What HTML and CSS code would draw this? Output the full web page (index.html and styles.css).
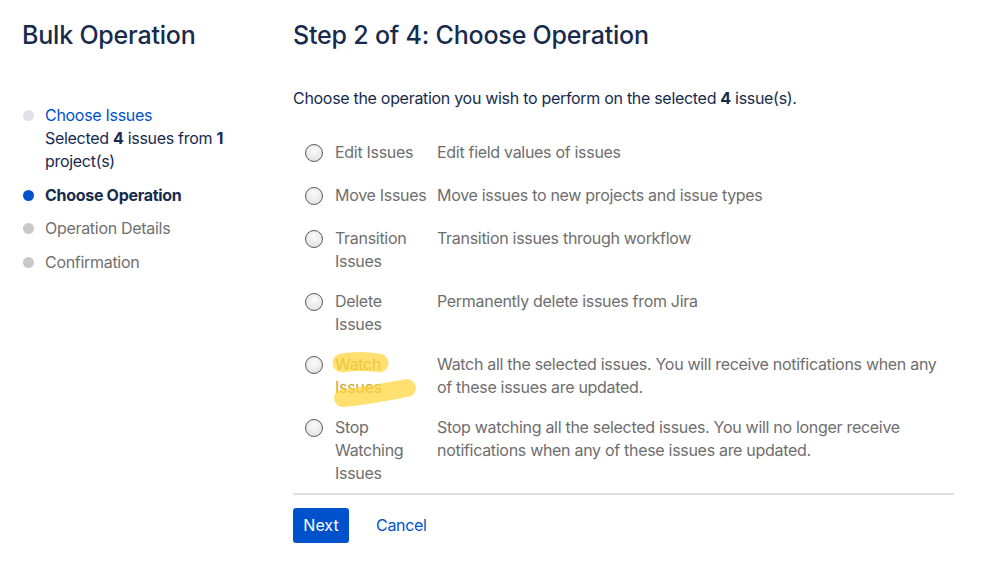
FILE: index.html
```html
<!DOCTYPE html>
<html>
<head>
<meta charset="utf-8">
<link rel="stylesheet" href="styles.css">
</head>
<body>
<div class="page">
  <aside class="side">
    <h1 class="title">Bulk Operation</h1>
    <ul class="steps">
      <li class="step done"><span class="dot"></span><div><a class="link" href="#">Choose Issues</a><div class="sub">Selected <b>4</b> issues from <b>1</b> project(s)</div></div></li>
      <li class="step current"><span class="dot"></span><div>Choose Operation</div></li>
      <li class="step"><span class="dot"></span><div>Operation Details</div></li>
      <li class="step"><span class="dot"></span><div>Confirmation</div></li>
    </ul>
  </aside>
  <main class="main">
    <h1 class="title">Step 2 of 4: Choose Operation</h1>
    <p class="intro">Choose the operation you wish to perform on the selected <b>4</b> issue(s).</p>
    <div class="ops">
      <div class="op"><span class="radio"></span><span class="label">Edit Issues</span><span class="desc">Edit field values of issues</span></div>
      <div class="op"><span class="radio"></span><span class="label">Move Issues</span><span class="desc">Move issues to new projects and issue types</span></div>
      <div class="op"><span class="radio"></span><span class="label">Transition<br>Issues</span><span class="desc">Transition issues through workflow</span></div>
      <div class="op"><span class="radio"></span><span class="label">Delete<br>Issues</span><span class="desc">Permanently delete issues from Jira</span></div>
      <div class="op"><span class="radio"></span><span class="label watch">Watch<br>Issues<svg class="marker" viewBox="0 0 90 60" width="90" height="60"><path class="m1" d="M7 10 C18 8, 32 8, 44 10" /><path class="m2" d="M8 45 C30 43, 55 38, 72 35" /></svg></span><span class="desc">Watch all the selected issues. You will receive notifications when any of these issues are updated.</span></div>
      <div class="op"><span class="radio"></span><span class="label">Stop<br>Watching<br>Issues</span><span class="desc">Stop watching all the selected issues. You will no longer receive notifications when any of these issues are updated.</span></div>
    </div>
    <div class="actions">
      <button class="btn-primary">Next</button>
      <a class="btn-link" href="#">Cancel</a>
    </div>
  </main>
</div>
</body>
</html>
```
FILE: styles.css
```css
* { box-sizing: border-box; }
html, body { margin: 0; padding: 0; background: #fff; }
body {
  font-family: Inter, "Open Sans", "Liberation Sans", sans-serif;
  font-size: 16px;
  line-height: 23px;
  letter-spacing: -0.3px;
  color: #172b4d;
}
.page {
  display: grid;
  grid-template-columns: 271px 661px;
  padding-left: 22px;
  padding-top: 20px;
}
.title {
  margin: 0;
  font-size: 25px;
  line-height: 30px;
  font-weight: 500;
  color: #172b4d;
  letter-spacing: -0.2px;
}
.steps {
  list-style: none;
  margin: 0;
  padding: 0;
  margin-top: 54px;
}
.step {
  display: flex;
  gap: 11px;
  color: #707070;
  margin-bottom: 10.5px;
}
.dot {
  width: 11px;
  height: 11px;
  border-radius: 50%;
  background: #c8c8c8;
  margin-top: 6px;
  margin-left: 1px;
  flex: none;
}
.step.done .dot { background: #dfe1e6; }
.step.current .dot { background: #0052cc; }
.step.current { color: #172b4d; font-weight: 700; }
.link { color: #0052cc; text-decoration: none; }
.sub { color: #172b4d; }
.sub b { font-weight: 700; }
.intro {
  margin: 37px 0 0;
  color: #172b4d;
}
.intro b { font-weight: 700; }
.ops {
  margin-top: 31px;
  border-bottom: 2px solid #dfdfdf;
  padding-bottom: 8px;
}
.op {
  display: grid;
  grid-template-columns: 30px 102px 1fr;
  padding-left: 12px;
  min-height: 26px;
  margin-bottom: 17px;
  color: #6e6e6e;
}
.op:last-child { margin-bottom: 0; }
.radio {
  width: 18px;
  height: 18px;
  border-radius: 50%;
  border: 1.3px solid #5a5a5a;
  background: radial-gradient(circle at 50% 35%, #fbfbfb 0%, #e6e6e6 70%, #d4d4d4 100%);
  margin-top: 2.5px;
}
.label { position: relative; white-space: nowrap; }
.desc { padding-right: 10px; }
.watch { color: #c9a53c; }
.marker {
  position: absolute;
  left: 0;
  top: 0;
  overflow: visible;
  pointer-events: none;
}
.marker path {
  fill: none;
  stroke: #ffd43a;
  stroke-opacity: 0.72;
  stroke-linecap: round;
}
.marker .m1 { stroke-width: 19; }
.marker .m2 { stroke-width: 18; }
.actions {
  display: flex;
  align-items: center;
  gap: 27px;
  margin-top: 13px;
}
.btn-primary {
  background: #0052cc;
  color: #fff;
  border: 0;
  border-radius: 3px;
  height: 35px;
  width: 56px;
  padding: 0;
  font: inherit;
}
.btn-link {
  color: #0052cc;
  text-decoration: none;
}
```
